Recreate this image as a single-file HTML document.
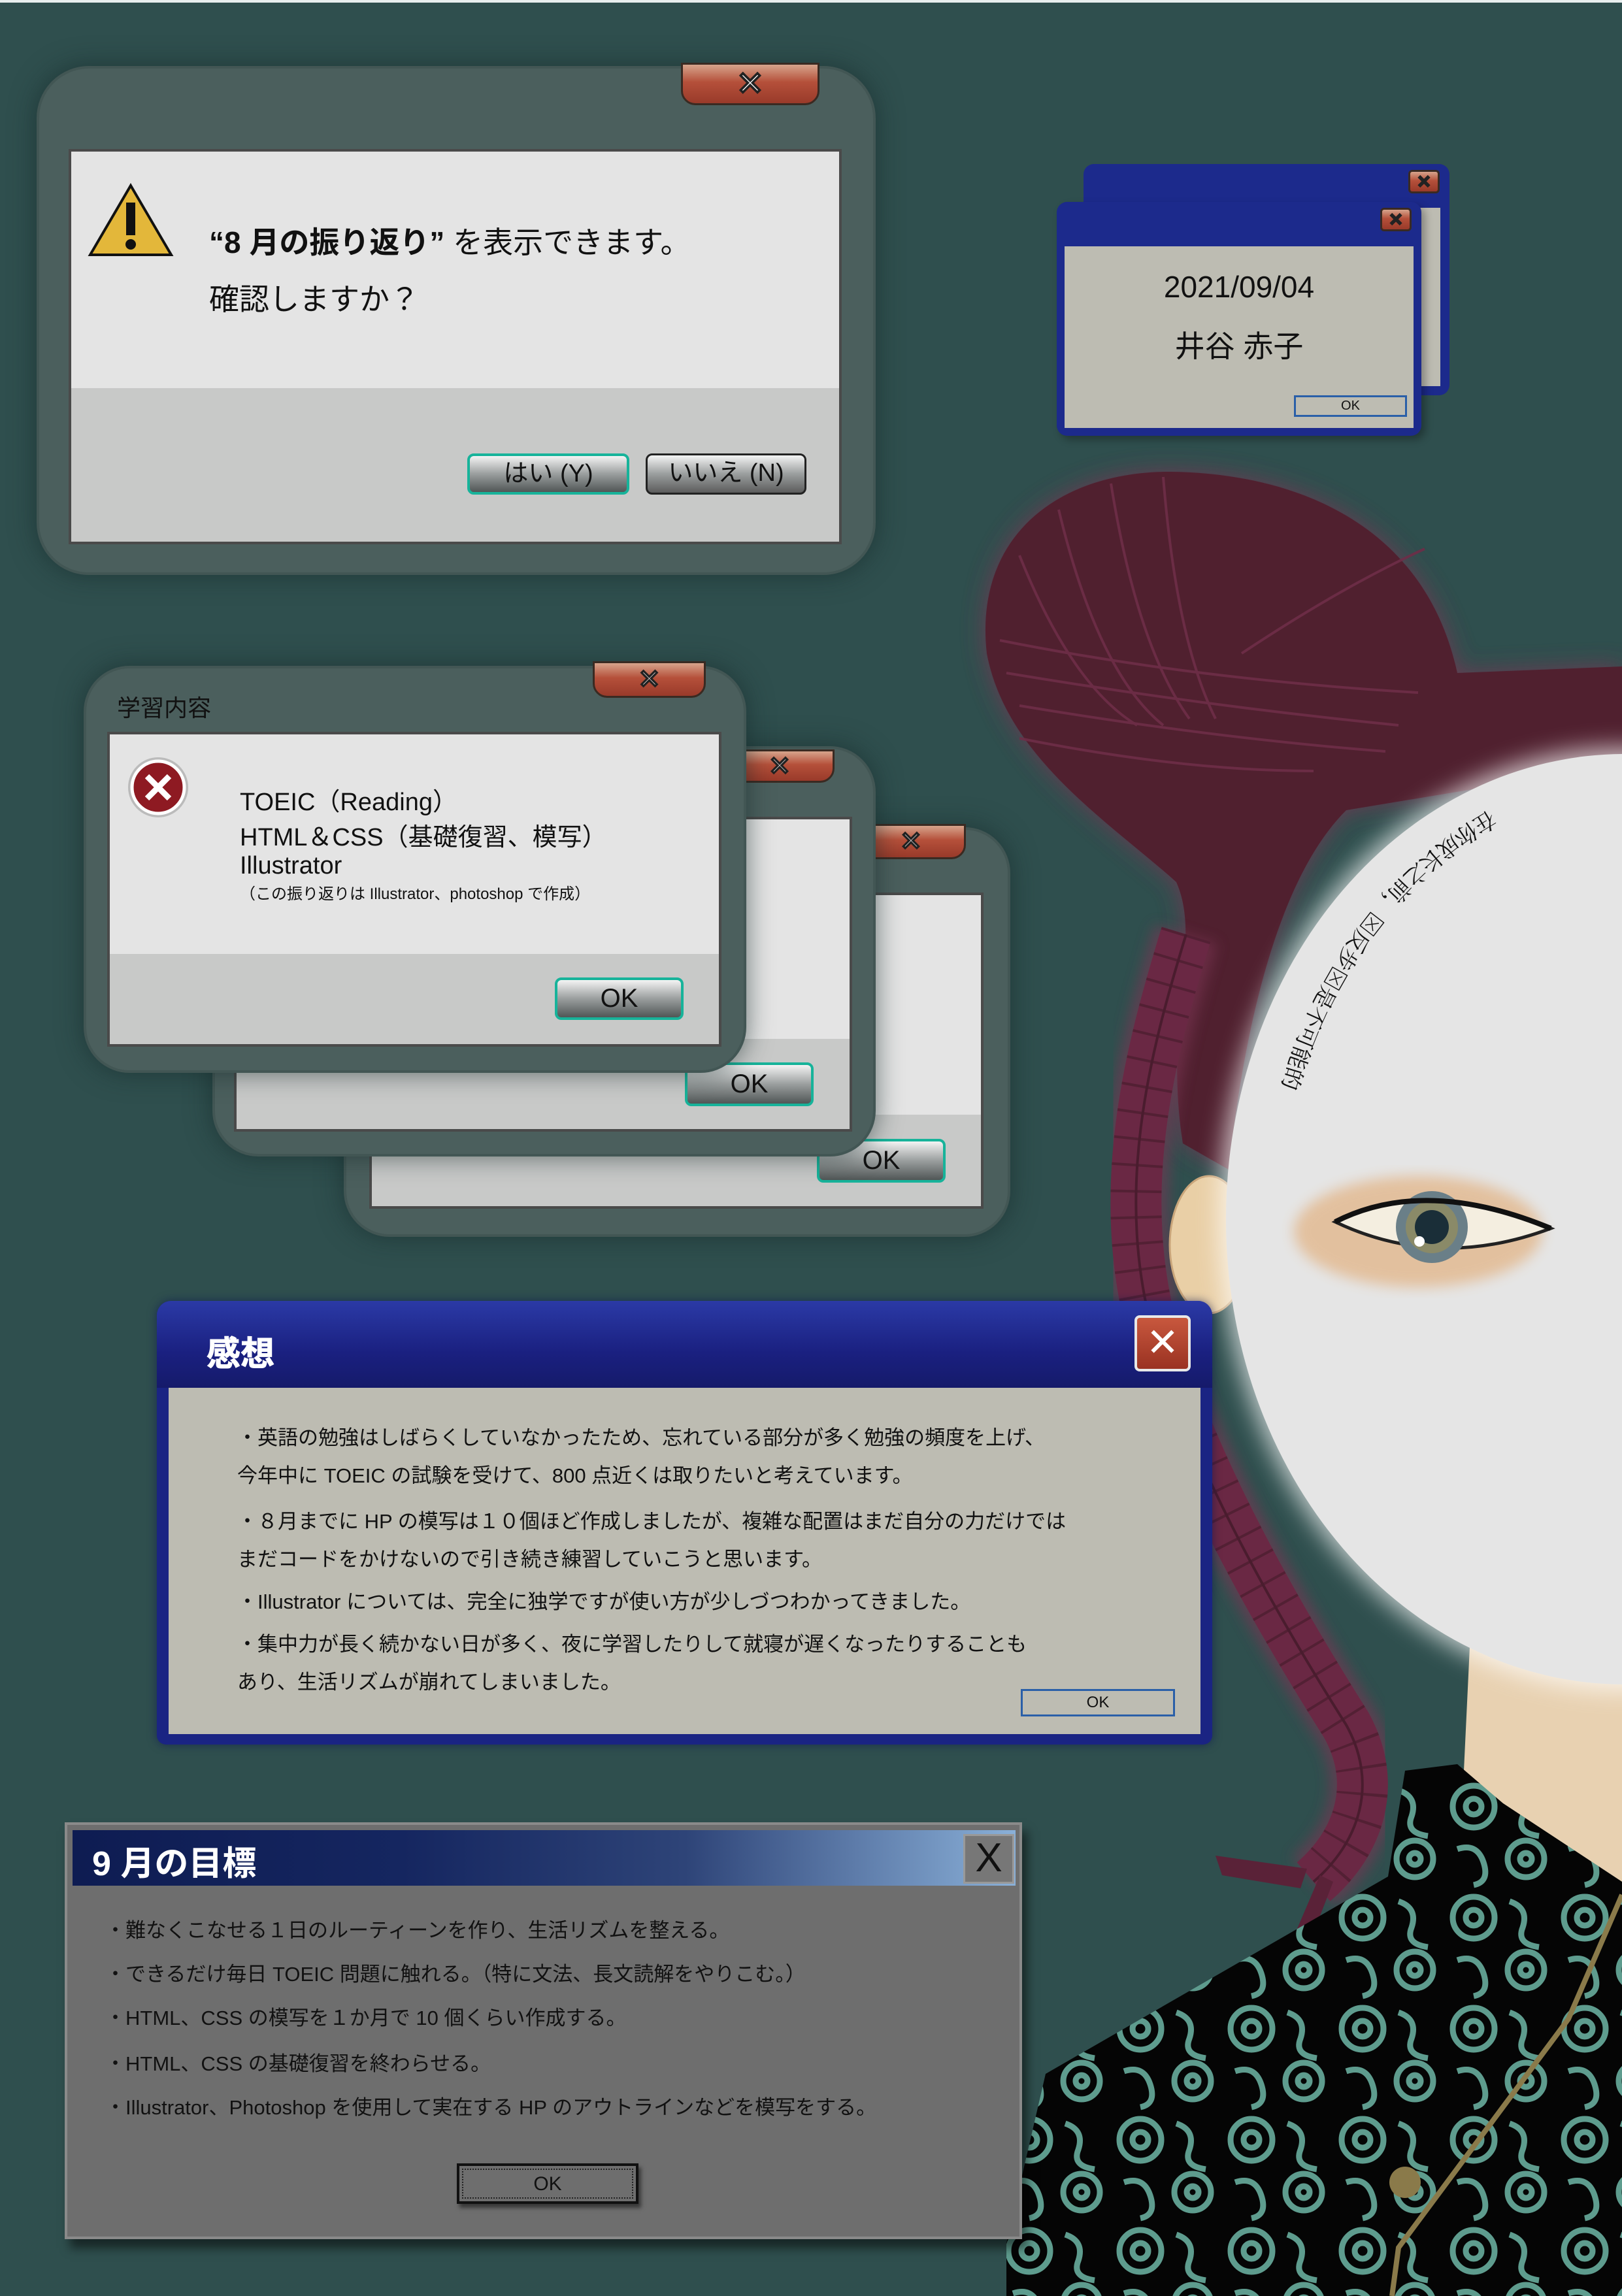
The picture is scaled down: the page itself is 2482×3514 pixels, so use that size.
<!DOCTYPE html>
<html><head><meta charset="utf-8"><style>
*{margin:0;padding:0;box-sizing:border-box}
body{width:2482px;height:3514px;background:#2f4f4e;position:relative;overflow:hidden;font-family:"Liberation Sans","Noto Sans CJK JP",sans-serif;color:#111}
.a{position:absolute}
.rbtn{position:absolute;border:3px solid #3a2a22;border-radius:0 0 22px 22px;background:linear-gradient(#d7a48c,#b5503a 45%,#993a2a);color:#fff;text-align:center;font-weight:bold;-webkit-text-stroke:2px #222}
.outer{position:absolute;background:#4b5f5d;border:4px solid #425654;border-radius:80px;box-shadow:0 0 40px rgba(20,40,40,.6)}
.inner{position:absolute;background:#e4e4e4;border:4px solid #4a4a4a;overflow:hidden}
.gray{position:absolute;left:0;right:0;bottom:0;background:#c8c9c8}
.okb{position:absolute;border:4px solid #17b39a;border-radius:10px;background:linear-gradient(#f4f4f4,#9a9e9e 50%,#505656);text-align:center;font-size:40px;color:#111}
.line{position:absolute;white-space:nowrap}
</style></head><body>
<div class="a" style="left:0;top:0;width:2482px;height:4px;background:#e8eeee"></div>

<svg class="a" style="left:0;top:0" width="2482" height="3514" viewBox="0 0 2482 3514">
<defs>
<filter id="gl" x="-20%" y="-20%" width="140%" height="140%"><feGaussianBlur stdDeviation="18"/></filter>
<filter id="bl"><feGaussianBlur stdDeviation="10"/></filter>
<pattern id="pt" width="170" height="170" patternUnits="userSpaceOnUse">
<rect width="170" height="170" fill="#050505"/>
<g fill="none" stroke="#5e9c8e" stroke-width="9">
<circle cx="45" cy="45" r="32"/><circle cx="45" cy="45" r="12"/>
<path d="M100 20 q30 10 20 40 q-10 25 25 30"/>
<path d="M20 110 q30 -10 40 20 q10 30 -15 35"/>
<circle cx="125" cy="125" r="28"/><circle cx="125" cy="125" r="9"/>
</g></pattern>
<path id="arc" d="M2280 1240 A620 720 0 0 0 1940 1760"/>
<path id="hair" d="M1510 1000 C1490 820 1620 722 1790 722 C1980 724 2180 800 2230 1030 L2482 1020 L2482 1170 L2060 1240 C1970 1330 1910 1520 1880 1790 L1810 1750 C1780 1560 1840 1440 1800 1350 C1700 1260 1540 1160 1510 1000 Z"/>
</defs>
<use href="#hair" fill="#7a3452" filter="url(#gl)" opacity=".8"/>
<use href="#hair" fill="#50202f"/>
<g stroke="#6e2e48" stroke-width="4" fill="none" opacity=".9">
<path d="M1560 850 q80 200 180 260"/><path d="M1620 780 q60 250 160 330"/><path d="M1700 740 q40 250 120 360"/><path d="M1780 730 q20 250 80 370"/>
<path d="M1530 980 q300 60 640 80"/><path d="M1540 1030 q300 50 600 80"/><path d="M1560 1080 q300 50 560 70"/><path d="M1900 1000 q150 -100 280 -160"/>
<path d="M1560 1130 q250 50 450 50"/>
</g>
<!-- braid -->
<path d="M1815 1430 C1760 1610 1700 1830 1770 2060 C1830 2250 1940 2450 2060 2640 C2110 2730 2080 2820 2010 2880" fill="none" stroke="#7a3452" stroke-width="100" filter="url(#bl)" opacity=".6"/>
<path d="M1815 1430 C1760 1610 1700 1830 1770 2060 C1830 2250 1940 2450 2060 2640 C2110 2730 2080 2820 2010 2880" fill="none" stroke="#6a2844" stroke-width="78"/>
<path d="M1815 1430 C1760 1610 1700 1830 1770 2060 C1830 2250 1940 2450 2060 2640 C2110 2730 2080 2820 2010 2880" fill="none" stroke="#4a1c2e" stroke-width="78" stroke-dasharray="4 36" opacity=".7"/>
<path d="M1815 1430 C1760 1610 1700 1830 1770 2060 C1830 2250 1940 2450 2060 2640 C2110 2730 2080 2820 2010 2880" fill="none" stroke="#4a1c2e" stroke-width="4"/>
<path d="M2000 2860 L1860 2840 L1870 2870 L1990 2890 Z" fill="#5a2238"/>
<path d="M2020 2870 L1960 3010 L1990 3010 L2040 2880 Z" fill="#5a2238"/>
<ellipse cx="1850" cy="1905" rx="60" ry="105" fill="#e9cfa6" stroke="#c9a57a" stroke-width="3"/>
<path d="M2250 2500 L2482 2460 L2482 2880 L2300 2760 L2240 2710 Z" fill="#e8d1b1"/>
<path d="M2150 2710 L2230 2700 L2300 2760 L2482 2880 L2482 3514 L1540 3514 L1540 3433 L1600 3174 L2124 2872 Z" fill="url(#pt)"/>
<path d="M2482 2900 L2400 3090 L2140 3440 L2130 3514" fill="none" stroke="#8a7a4a" stroke-width="8"/>
<circle cx="2150" cy="3340" r="24" fill="#8a7a4a"/>
<ellipse cx="2486" cy="1866" rx="620" ry="722" fill="#fff" filter="url(#gl)" opacity=".7"/>
<ellipse cx="2486" cy="1866" rx="610" ry="712" fill="#e5e5e5"/>
<ellipse cx="2170" cy="1885" rx="190" ry="85" fill="#e0944a" opacity=".45" filter="url(#bl)"/>
<path d="M2043 1870 Q2180 1800 2373 1880 Q2200 1945 2043 1870 Z" fill="#f4eee0" stroke="#222" stroke-width="5"/>
<circle cx="2191" cy="1878" r="55" fill="#6a7f88"/><circle cx="2191" cy="1878" r="40" fill="#8a8a68"/><circle cx="2191" cy="1878" r="26" fill="#1a2e38"/><circle cx="2172" cy="1900" r="8" fill="#fff"/>
<path d="M2043 1870 Q2180 1800 2373 1880" fill="none" stroke="#111" stroke-width="8"/>
<text font-family="Noto Serif CJK SC, serif" font-size="34" fill="#111"><textPath href="#arc">在你成长之前，⊠反步⊠是不可能的</textPath></text>
</svg>

<div class="outer" style="left:56px;top:101px;width:1284px;height:779px"></div>
<div class="rbtn" style="left:1042px;top:96px;width:212px;height:65px;font-size:50px;line-height:58px">✕</div>
<div class="inner" style="left:105px;top:228px;width:1183px;height:605px"><div class="gray" style="top:362px"></div></div>
<svg class="a" style="left:134px;top:280px" width="132" height="114"><path d="M66 4 L128 110 L4 110 Z" fill="#e3b73a" stroke="#111" stroke-width="4"/><rect x="59" y="30" width="14" height="50" fill="#111"/><circle cx="66" cy="94" r="8" fill="#111"/></svg>
<div class="line" style="left:320px;top:335px;font-size:46px;font-weight:bold">“8 月の振り返り” <span style="font-weight:normal">を表示できます。</span></div>
<div class="line" style="left:320px;top:422px;font-size:46px">確認しますか？</div>
<div class="okb" style="left:715px;top:694px;width:248px;height:63px;line-height:55px;font-size:38px">はい (Y)</div>
<div class="okb" style="left:988px;top:694px;width:246px;height:63px;line-height:55px;font-size:38px;border:3px solid #222;background:linear-gradient(#f4f4f4,#9a9e9e 50%,#5c5c5c)">いいえ (N)</div>

<div class="a" style="left:1658px;top:251px;width:560px;height:354px;background:#1c2a8c;border-radius:16px"><div class="a" style="left:14px;top:67px;right:14px;bottom:14px;background:#bdbcb2"></div></div>
<div class="rbtn" style="left:2155px;top:260px;width:48px;height:36px;border-radius:6px;font-size:26px;line-height:30px">✕</div>
<div class="a" style="left:1617px;top:309px;width:558px;height:358px;background:#1c2a8c;border-radius:16px;box-shadow:6px 6px 12px rgba(0,0,0,.3)"><div class="a" style="left:12px;top:68px;right:12px;bottom:12px;background:#bdbcb2"></div></div>
<div class="rbtn" style="left:2112px;top:318px;width:48px;height:36px;border-radius:6px;font-size:26px;line-height:30px">✕</div>
<div class="line" style="left:1617px;width:558px;text-align:center;top:412px;font-size:46px">2021/09/04</div>
<div class="line" style="left:1617px;width:558px;text-align:center;top:494px;font-size:46px">井谷 赤子</div>
<div class="a" style="left:1980px;top:605px;width:173px;height:33px;border:3px solid #2a5fa8;font-size:20px;text-align:center;line-height:27px">OK</div>

<div class="outer" style="left:526px;top:1266px;width:1020px;height:627px;border-radius:70px"></div>
<div class="rbtn" style="left:1310px;top:1261px;width:168px;height:54px;font-size:40px;line-height:48px">✕</div>
<div class="inner" style="left:565px;top:1366px;width:940px;height:484px"><div class="gray" style="top:336px"></div></div>
<div class="okb" style="left:1250px;top:1743px;width:197px;height:67px;line-height:58px">OK</div>

<div class="outer" style="left:325px;top:1142px;width:1015px;height:628px;border-radius:70px"></div>
<div class="rbtn" style="left:1109px;top:1147px;width:168px;height:51px;font-size:40px;line-height:46px">✕</div>
<div class="inner" style="left:358px;top:1250px;width:946px;height:482px"><div class="gray" style="top:336px"></div></div>
<div class="okb" style="left:1048px;top:1626px;width:197px;height:67px;line-height:58px">OK</div>

<div class="outer" style="left:128px;top:1019px;width:1014px;height:623px;border-radius:70px"></div>
<div class="rbtn" style="left:907px;top:1012px;width:173px;height:56px;font-size:40px;line-height:50px">✕</div>
<div class="line" style="left:179px;top:1055px;font-size:36px">学習内容</div>
<div class="inner" style="left:164px;top:1120px;width:940px;height:482px"><div class="gray" style="top:336px"></div></div>
<svg class="a" style="left:192px;top:1155px" width="100" height="100"><circle cx="50" cy="50" r="46" fill="#bbb"/><circle cx="50" cy="50" r="40" fill="#8e1a22" stroke="#fff" stroke-width="5"/><path d="M33 33 L67 67 M67 33 L33 67" stroke="#fff" stroke-width="9"/></svg>
<div class="line" style="left:367px;top:1196px;font-size:38px">TOEIC（Reading）</div>
<div class="line" style="left:367px;top:1250px;font-size:38px">HTML＆CSS（基礎復習、模写）</div>
<div class="line" style="left:367px;top:1304px;font-size:38px">Illustrator</div>
<div class="line" style="left:367px;top:1348px;font-size:24px">（この振り返りは Illustrator、photoshop で作成）</div>
<div class="okb" style="left:849px;top:1496px;width:197px;height:65px;line-height:56px">OK</div>

<div class="a" style="left:240px;top:1991px;width:1615px;height:679px;background:#1a2483;border-radius:22px 22px 14px 14px;box-shadow:0 0 14px rgba(10,20,80,.6)"></div>
<div class="a" style="left:240px;top:1991px;width:1615px;height:133px;background:linear-gradient(#2b3aa6,#1a2080 60%,#151a6a);border-radius:22px 22px 0 0"></div>
<div class="line" style="left:316px;top:2030px;font-size:52px;font-weight:bold;color:#fff;-webkit-text-stroke:1px #fff">感想</div>
<div class="a" style="left:1736px;top:2013px;width:86px;height:86px;border:4px solid #e8e8e8;border-radius:8px;background:linear-gradient(#c8583e,#9a3222);color:#fff;font-size:60px;line-height:76px;text-align:center">✕</div>
<div class="a" style="left:258px;top:2124px;width:1579px;height:530px;background:#bdbcb2;font-size:31px">
<div class="line" style="left:105px;top:51px">・英語の勉強はしばらくしていなかったため、忘れている部分が多く勉強の頻度を上げ、</div>
<div class="line" style="left:105px;top:109px">今年中に TOEIC の試験を受けて、800 点近くは取りたいと考えています。</div>
<div class="line" style="left:105px;top:179px">・８月までに HP の模写は１０個ほど作成しましたが、複雑な配置はまだ自分の力だけでは</div>
<div class="line" style="left:105px;top:237px">まだコードをかけないので引き続き練習していこうと思います。</div>
<div class="line" style="left:105px;top:302px">・Illustrator については、完全に独学ですが使い方が少しづつわかってきました。</div>
<div class="line" style="left:105px;top:367px">・集中力が長く続かない日が多く、夜に学習したりして就寝が遅くなったりすることも</div>
<div class="line" style="left:105px;top:425px">あり、生活リズムが崩れてしまいました。</div>
<div class="a" style="left:1304px;top:461px;width:236px;height:42px;border:3px solid #2a5fa8;font-size:24px;text-align:center;line-height:36px">OK</div>
</div>

<div class="a" style="left:99px;top:2789px;width:1465px;height:638px;background:#6e6e6e;border:4px solid #8a8a8a;box-shadow:8px 14px 14px rgba(0,0,0,.5)"></div>
<div class="a" style="left:111px;top:2801px;width:1443px;height:85px;background:linear-gradient(90deg,#0e1c52,#152660 35%,#2e4478 65%,#8ab0d8)"></div>
<div class="line" style="left:141px;top:2810px;font-size:52px;font-weight:bold;color:#fff">9 月の目標</div>
<div class="a" style="left:1474px;top:2807px;width:78px;height:76px;background:#777;border:3px solid #999;font-size:62px;line-height:68px;text-align:center;color:#111">X</div>
<div style="font-size:31px">
<div class="line" style="left:161px;top:2929px">・難なくこなせる１日のルーティーンを作り、生活リズムを整える。</div>
<div class="line" style="left:161px;top:2996px">・できるだけ毎日 TOEIC 問題に触れる。（特に文法、長文読解をやりこむ。）</div>
<div class="line" style="left:161px;top:3063px">・HTML、CSS の模写を１か月で 10 個くらい作成する。</div>
<div class="line" style="left:161px;top:3133px">・HTML、CSS の基礎復習を終わらせる。</div>
<div class="line" style="left:161px;top:3200px">・Illustrator、Photoshop を使用して実在する HP のアウトラインなどを模写をする。</div>
</div>
<div class="a" style="left:699px;top:3311px;width:278px;height:62px;background:#6e6e6e;border:4px solid #111;box-shadow:4px 6px 6px rgba(0,0,0,.5)"><div class="a" style="left:4px;top:4px;right:4px;bottom:4px;border:2px dotted #222;font-size:30px;text-align:center;line-height:44px">OK</div></div>
</body></html>
